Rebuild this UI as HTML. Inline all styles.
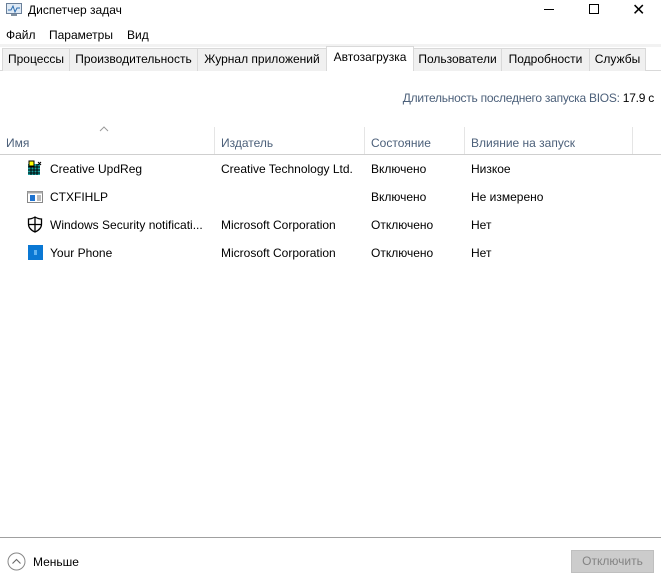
<!DOCTYPE html>
<html><head><meta charset="utf-8"><style>
*{margin:0;padding:0;box-sizing:border-box}
body{width:661px;height:584px;background:#fff;font-family:"Liberation Sans",sans-serif;font-size:12px;color:#000;position:relative;overflow:hidden}
.a{position:absolute;white-space:nowrap}
.tab{position:absolute;top:48px;height:23px;background:#f0f0f0;border:1px solid #d9d9d9;border-bottom:none;line-height:21px;text-align:center;font-size:12px}
.hd{color:#4c607a}
.g{color:#6d6d6d}
.vl{position:absolute;top:127px;width:1px;height:27px;background:#e5e5e5}
</style></head><body>
<svg class="a" style="left:6px;top:3px" width="16" height="14" viewBox="0 0 16 14"><rect x="0.5" y="0.5" width="15" height="10" fill="#dfeaf5" stroke="#6a7f99"/><polyline points="2,7 5,7 7,3 9,9 11,5 14,5" fill="none" stroke="#2b6cb0" stroke-width="1"/><rect x="5" y="11" width="6" height="2" fill="#8090a0"/></svg>
<div class="a" style="left:28px;top:3px">Диспетчер задач</div>
<div class="a" style="left:544px;top:9px;width:10px;height:1px;background:#000"></div>
<div class="a" style="left:589px;top:4px;width:10px;height:10px;border:1px solid #000"></div>
<div class="a" style="left:632px;top:0px;font-size:16px">✕</div>
<div class="a" style="left:6px;top:28px">Файл</div>
<div class="a" style="left:49px;top:28px">Параметры</div>
<div class="a" style="left:127px;top:28px">Вид</div>
<div class="a" style="left:0;top:44px;width:661px;height:27px;background:#fff;border-top:3px solid #f2f2f2"></div>
<div class="a" style="left:0;top:70px;width:661px;height:1px;background:#d9d9d9"></div>
<div class="tab" style="left:2px;width:68px">Процессы</div>
<div class="tab" style="left:69px;width:129px">Производительность</div>
<div class="tab" style="left:197px;width:130px">Журнал приложений</div>
<div class="tab" style="left:326px;top:46px;height:25px;width:88px;background:#fff">Автозагрузка</div>
<div class="tab" style="left:413px;width:89px">Пользователи</div>
<div class="tab" style="left:501px;width:89px">Подробности</div>
<div class="tab" style="left:589px;width:57px">Службы</div>
<div class="a" style="right:7px;top:91px;letter-spacing:-0.25px"><span class="hd">Длительность последнего запуска BIOS:</span> 17.9 с</div>
<svg class="a" style="left:99px;top:126px" width="10" height="6"><path d="M1 5l4-4 4 4" fill="none" stroke="#9a9a9a"/></svg>
<div class="vl" style="left:214px"></div><div class="vl" style="left:364px"></div><div class="vl" style="left:464px"></div><div class="vl" style="left:632px"></div>
<div class="a hd" style="left:6px;top:136px">Имя</div>
<div class="a hd" style="left:221px;top:136px">Издатель</div>
<div class="a hd" style="left:371px;top:136px">Состояние</div>
<div class="a hd" style="left:471px;top:136px">Влияние на запуск</div>
<div class="a" style="left:0;top:154px;width:661px;height:1px;background:#cfcfcf"></div>
<svg class="a" style="left:27px;top:160px" width="16" height="16"><rect x="1" y="4" width="12" height="11" fill="#1aa0a0"/><path d="M1 7h12M1 10h12M1 13h12M4 4v11M7 4v11M10 4v11" stroke="#000" stroke-width="1"/><rect x="2" y="1" width="5" height="5" fill="#ff0" stroke="#000"/><path d="M11 2l3 3M14 2l-3 3" stroke="#000"/></svg>
<div class="a" style="left:50px;top:162px">Creative UpdReg</div>
<div class="a" style="left:221px;top:162px">Creative Technology Ltd.</div>
<div class="a" style="left:371px;top:162px">Включено</div>
<div class="a" style="left:471px;top:162px">Низкое</div>
<svg class="a" style="left:27px;top:190px" width="16" height="14"><rect x="0.5" y="1.5" width="15" height="11" fill="#fff" stroke="#888"/><rect x="0.5" y="1.5" width="15" height="2" fill="#aaa"/><rect x="3" y="5" width="5" height="6" fill="#1e73d0"/><path d="M10 6h4M10 8h4M10 10h4" stroke="#777"/></svg>
<div class="a" style="left:50px;top:190px">CTXFIHLP</div>
<div class="a" style="left:371px;top:190px">Включено</div>
<div class="a" style="left:471px;top:190px">Не измерено</div>
<svg class="a" style="left:27px;top:216px" width="16" height="17"><path d="M8 1C5.5 2.5 3.5 3 1.5 3v5c0 4 3 6.5 6.5 8 3.5-1.5 6.5-4 6.5-8V3C12.5 3 10.5 2.5 8 1z" fill="none" stroke="#000" stroke-width="1.3"/><path d="M8 1v15M1.5 8.5h13" stroke="#000" stroke-width="1.3"/></svg>
<div class="a" style="left:50px;top:218px">Windows Security notificati...</div>
<div class="a" style="left:221px;top:218px">Microsoft Corporation</div>
<div class="a" style="left:371px;top:218px">Отключено</div>
<div class="a" style="left:471px;top:218px">Нет</div>
<div class="a" style="left:28px;top:245px;width:15px;height:15px;background:#0a78d4"><div style="position:absolute;left:6px;top:5px;width:3px;height:5px;background:#5fb2f0"></div></div>
<div class="a" style="left:50px;top:246px">Your Phone</div>
<div class="a" style="left:221px;top:246px">Microsoft Corporation</div>
<div class="a" style="left:371px;top:246px">Отключено</div>
<div class="a" style="left:471px;top:246px">Нет</div>
<div class="a" style="left:0;top:537px;width:661px;height:1px;background:#a0a0a0"></div>
<svg class="a" style="left:7px;top:552px" width="19" height="19"><circle cx="9.5" cy="9.5" r="8.5" fill="none" stroke="#888"/><path d="M5.5 11.5l4-4 4 4" fill="none" stroke="#666" stroke-width="1.1"/></svg>
<div class="a" style="left:33px;top:555px">Меньше</div>
<div class="a" style="left:571px;top:550px;width:83px;height:23px;background:#cccccc;border:1px solid #bfbfbf;color:#838383;text-align:center;line-height:21px">Отключить</div>
</body></html>
